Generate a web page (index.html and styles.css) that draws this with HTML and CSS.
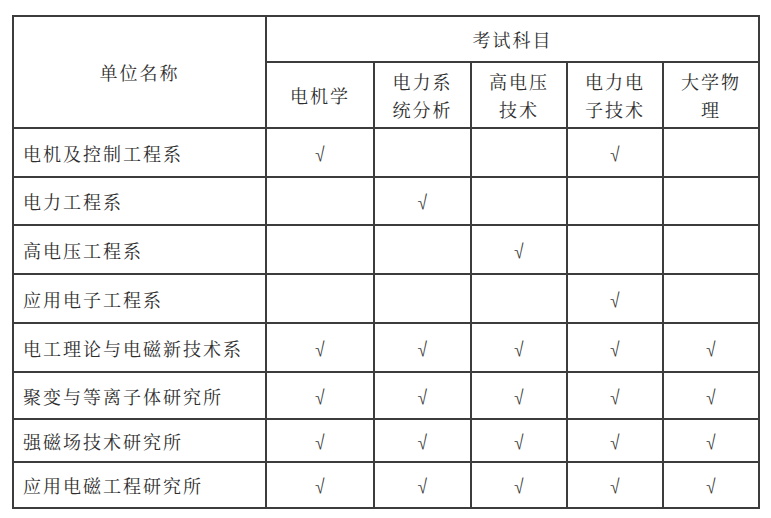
FILE: index.html
```html
<!DOCTYPE html>
<html lang="zh-CN">
<head>
<meta charset="utf-8">
<title>考试科目</title>
<link rel="stylesheet" href="styles.css">
</head>
<body>
<table class="exam">
  <colgroup>
    <col class="c-name">
    <col class="c-a">
    <col class="c-b">
    <col class="c-c">
    <col class="c-c">
    <col class="c-c">
  </colgroup>
  <thead>
    <tr class="h1">
      <th rowspan="2" class="unit">单位名称</th>
      <th colspan="5">考试科目</th>
    </tr>
    <tr class="h2">
      <th>电机学</th>
      <th>电力系<br>统分析</th>
      <th>高电压<br>技术</th>
      <th>电力电<br>子技术</th>
      <th>大学物<br>理</th>
    </tr>
  </thead>
  <tbody>
    <tr class="r49"><td class="name">电机及控制工程系</td><td>√</td><td></td><td></td><td>√</td><td></td></tr>
    <tr class="r48"><td class="name">电力工程系</td><td></td><td>√</td><td></td><td></td><td></td></tr>
    <tr class="r49"><td class="name">高电压工程系</td><td></td><td></td><td>√</td><td></td><td></td></tr>
    <tr class="r49"><td class="name">应用电子工程系</td><td></td><td></td><td></td><td>√</td><td></td></tr>
    <tr class="r49"><td class="name">电工理论与电磁新技术系</td><td>√</td><td>√</td><td>√</td><td>√</td><td>√</td></tr>
    <tr class="r47"><td class="name">聚变与等离子体研究所</td><td>√</td><td>√</td><td>√</td><td>√</td><td>√</td></tr>
    <tr class="r43"><td class="name">强磁场技术研究所</td><td>√</td><td>√</td><td>√</td><td>√</td><td>√</td></tr>
    <tr class="r46"><td class="name">应用电磁工程研究所</td><td>√</td><td>√</td><td>√</td><td>√</td><td>√</td></tr>
  </tbody>
</table>
</body>
</html>
```
FILE: styles.css
```css
html, body {
  margin: 0;
  padding: 0;
  background: #ffffff;
}

body {
  padding: 15px 0 0 12px;
  font-family: "Noto Serif CJK SC", "Noto Sans CJK SC", serif;
  color: #2e2e2e;
}

.exam {
  border-collapse: collapse;
  table-layout: fixed;
  width: 748px;
  border: 2px solid #4a4a4a;
}

.c-name { width: 253px; }
.c-a { width: 108px; }
.c-b { width: 97px; }
.c-c { width: 96px; }

.exam th,
.exam td {
  border: 2px solid #3c3c3c;
  padding: 0;
  text-align: center;
  vertical-align: middle;
  font-weight: normal;
  font-size: 18px;
  letter-spacing: 2px;
  line-height: 28px;
  color: #2e2e2e;
}

.exam td {
  font-size: 15px;
  font-weight: bold;
  letter-spacing: 0;
  color: #3a3a3a;
}

.exam td.name {
  text-align: left;
  padding-left: 9px;
  font-size: 18px;
  font-weight: normal;
  letter-spacing: 2px;
  color: #2e2e2e;
}

.h1 { height: 46px; }
.h2 { height: 66px; }
.r49 { height: 49px; }
.r48 { height: 48px; }
.r47 { height: 47px; }
.r46 { height: 46px; }
.r43 { height: 43px; }
```
